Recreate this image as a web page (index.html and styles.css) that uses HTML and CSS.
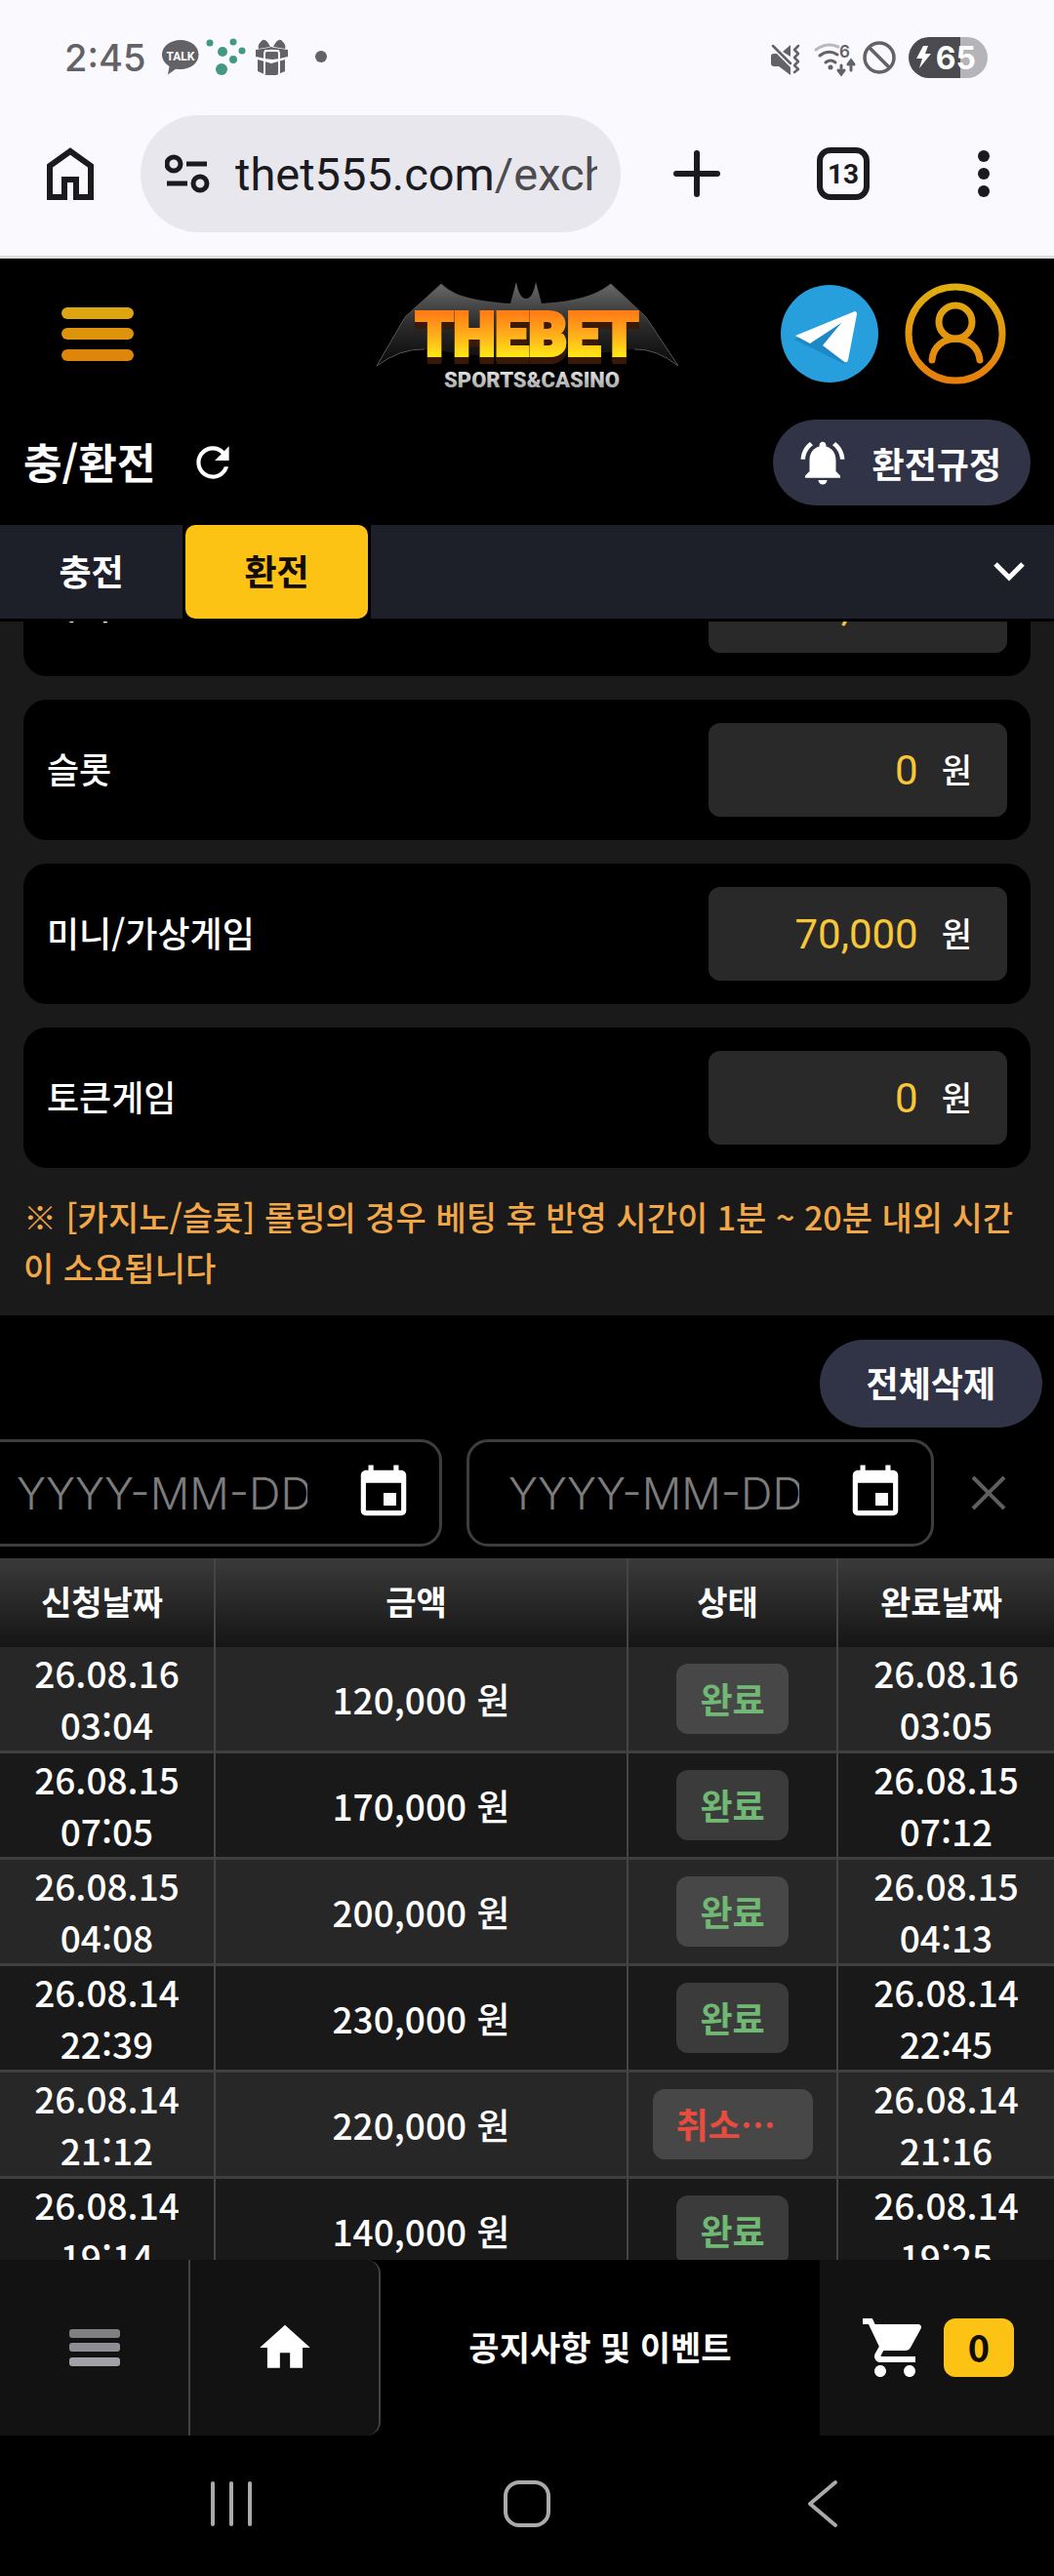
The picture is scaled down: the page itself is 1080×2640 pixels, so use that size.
FILE: index.html
```html
<!DOCTYPE html>
<html lang="ko">
<head>
  <meta charset="UTF-8">
  <meta name="viewport" content="width=device-width, initial-scale=1">
  <title>충/환전</title>
  <link rel="stylesheet" href="styles.css">
</head>
<body>
  <div class="status-bar">
    <div class="status-left">
      <span class="clock">2:45</span>
      <svg class="status-notices" width="172" height="40" viewBox="0 0 172 40">
        <path fill="#636267" d="M21 2C10.500 2 2 8.500 2 17c0 5 3 9 7.500 12L8 37.500l8-5.800c1.600.3 3.300.3 5 .3 10.500 0 18.500-6.500 18.500-15S31.500 2 21 2z"/>
        <text x="21" y="23" class="talk-text" text-anchor="middle">TALK</text>
        <g fill="#419983">
          <circle cx="51" cy="5" r="3.500"/>
          <circle cx="64" cy="14" r="5"/>
          <circle cx="75" cy="4" r="3.500"/>
          <circle cx="84" cy="13" r="3.500"/>
          <circle cx="75" cy="22" r="4"/>
          <circle cx="63" cy="32" r="6"/>
        </g>
        <g fill="#636267">
          <path d="M98 12l13-2 3-1 3 1 14 2v8l-8 2-9 1-8-1-8-2z"/>
          <path d="M100 22l14 4 14-4v12l-9 4h-10l-9-4z"/>
          <path d="M113 9c-3-7-7-9-9-6-3 3-4 5-3 8zM116 9c3-7 7-9 9-6 3 3 4 5 3 8z"/>
        </g>
        <path fill="none" stroke="#f9f9fe" stroke-width="2" d="M98 20l9 2 8 1 8-1 8-2M107 37V15c0-3 15-3 15 0v22M107 13h15"/>
        <circle cx="165" cy="19" r="6" fill="#636267"/>
      </svg>
    </div>
    <div class="status-right">
      <svg width="136" height="40" viewBox="0 0 136 40">
        <g fill="#636267">
          <path d="M1 18q0-2 3-2h3l14 14v8L9 29H4q-3 0-3-3zM13 14l8-7v12z"/>
        </g>
        <path fill="none" stroke="#636267" stroke-width="2.500" stroke-linecap="round" stroke-linejoin="round" d="M3 8l18 18M29 8l-4 4 4 4-4 4 4 4-4 4 4 4-4 3"/>
        <g fill="none" stroke="#636267" stroke-width="3" stroke-linecap="round">
          <path stroke="#b9b9be" d="M47 12q11-8 23-3"/>
          <path d="M51 18q9-7 18-1M57 25q5-4 10 0M73 28v8M70 33l3 4 3-4M83 33v-9M80 27l3-4 3 4"/>
        </g>
        <circle cx="62" cy="30" r="2.500" fill="#636267"/>
        <text x="71" y="20" class="wifi-gen">6</text>
        <circle cx="112" cy="20" r="15" fill="none" stroke="#636267" stroke-width="3.500"/>
        <path stroke="#636267" stroke-width="3.500" d="M101 9l22 22"/>
      </svg>
      <div class="battery">
        <svg width="16" height="24" viewBox="0 0 16 24"><path fill="#fff" d="M8 0h5l-3 8h6L4 23l3-10H1z"/></svg>
        <span>65</span>
      </div>
    </div>
  </div>

  <div class="toolbar">
    <button class="tool-btn tool-home" aria-label="Home">
      <svg width="48" height="54" viewBox="0 0 48 54"><path fill="none" stroke="#1b1a1f" stroke-width="6" d="M3 19L24 4l21 15v32H30V33H18v18H3z"/></svg>
    </button>
    <div class="address">
      <svg width="46" height="40" viewBox="0 0 46 40">
        <g fill="none" stroke="#1b1a1f" stroke-width="5">
          <circle cx="9" cy="10" r="7"/>
          <circle cx="36" cy="30" r="7"/>
          <path d="M22 10h21M2 30h21"/>
        </g>
      </svg>
      <div class="url">thet555.com<span>/exch</span></div>
    </div>
    <button class="tool-btn tool-new" aria-label="New tab">
      <svg width="48" height="48" viewBox="0 0 48 48"><path stroke="#1b1a1f" stroke-width="6" stroke-linecap="round" d="M24 3v42M3 24h42"/></svg>
    </button>
    <button class="tool-btn" aria-label="Tabs"><span class="tab-count">13</span></button>
    <button class="tool-btn" aria-label="Menu">
      <svg width="12" height="48" viewBox="0 0 12 48"><g fill="#1b1a1f"><circle cx="6" cy="6" r="6"/><circle cx="6" cy="24" r="6"/><circle cx="6" cy="42" r="6"/></g></svg>
    </button>
  </div>

  <header class="site-header">
    <button class="icon-btn header-menu" aria-label="메뉴">
      <svg width="76" height="56" viewBox="0 0 76 56">
        <rect x="1" y="1" width="74" height="12" rx="6" fill="#dda50f"/>
        <rect x="1" y="22" width="74" height="12" rx="6" fill="#dd940b"/>
        <rect x="1" y="44" width="74" height="12" rx="6" fill="#dd860b"/>
      </svg>
    </button>
    <a href="#" class="logo" aria-label="THEBET SPORTS&amp;CASINO">
      <svg width="310" height="120" viewBox="0 0 310 120">
        <defs>
          <linearGradient id="gold" x1="0" y1="0" x2="0" y2="1">
            <stop offset="0.2" stop-color="#ff7f16"/>
            <stop offset="0.5" stop-color="#ffae1b"/>
            <stop offset="0.8" stop-color="#ffe516"/>
          </linearGradient>
          <linearGradient id="wing" x1="0" y1="0" x2="0" y2="1">
            <stop offset="0" stop-color="#6b6b6b"/>
            <stop offset="0.5" stop-color="#2c2c2c"/>
            <stop offset="1" stop-color="#080808"/>
          </linearGradient>
          <linearGradient id="silver" x1="0" y1="0" x2="0" y2="1">
            <stop offset="0" stop-color="#eee"/>
            <stop offset="1" stop-color="#999"/>
          </linearGradient>
        </defs>
        <path fill="url(#wing)" d="M1 93L30 43 67 9q16 17 71 20l6-22q3 17 10 17t10-17l6 22q50-3 71-20l36 34 33 50q-23-18-45-17L154 88 50 76Q25 75 1 93z"/>
        <path fill="none" stroke="#555" d="M1 93L30 43 67 9q14 13 36 18M1 93q24-18 49-17M205 27q20-6 36-18l36 34 33 50q-23-18-45-17"/>
        <text x="155" y="82" text-anchor="middle" class="logo-name">THEBET</text>
        <text x="160" y="115" text-anchor="middle" class="logo-sub">SPORTS&amp;CASINO</text>
      </svg>
    </a>
    <div class="header-links">
      <a href="#" aria-label="텔레그램">
        <svg width="101" height="102" viewBox="0 0 101 102">
          <circle cx="50" cy="51" r="50" fill="#279fdc"/>
          <path fill="#1477b4" d="M14 57l61-27-10 52z" opacity=".55"/>
          <path fill="#fff" d="M15 53l61-25c1 0 2 1 2 3l-9 47q-1 4-5 1L43 63l19-23-32 21z"/>
        </svg>
      </a>
      <a href="#" aria-label="내 정보">
        <svg width="106" height="106" viewBox="0 0 106 106">
          <defs>
            <linearGradient id="ring" gradientUnits="userSpaceOnUse" x1="0" y1="0" x2="0" y2="106">
              <stop offset="0" stop-color="#e0b010"/>
              <stop offset="1" stop-color="#e57d0c"/>
            </linearGradient>
          </defs>
          <g fill="none" stroke="url(#ring)" stroke-width="7">
            <circle cx="53" cy="53" r="48"/>
            <circle cx="53" cy="41" r="17"/>
            <path stroke-linecap="round" d="M29 80c2-29 46-29 49 0"/>
          </g>
        </svg>
      </a>
    </div>
  </header>

  <div class="page-title">
    <h1>충/환전</h1>
    <button class="icon-btn" aria-label="새로고침">
      <svg width="50" height="50" viewBox="0 0 24 24"><path fill="#fff" d="M17.650 6.350C16.200 4.900 14.210 4 12 4c-4.420 0-7.990 3.580-7.990 8s3.570 8 7.990 8c3.730 0 6.840-2.550 7.730-6h-2.080c-.82 2.330-3.040 4-5.650 4-3.310 0-6-2.690-6-6s2.690-6 6-6c1.660 0 3.140.69 4.220 1.780L13 11h7V4l-2.350 2.350z"/></svg>
    </button>
    <button class="pill rules-btn">
      <svg width="54" height="54" viewBox="0 0 24 24">
        <path fill="#fff" d="M7.580 4.080L6.150 2.650C3.750 4.480 2.170 7.300 2.030 10.500h2c.15-2.650 1.510-4.970 3.550-6.420zM19.970 10.500h2c-.15-3.200-1.730-6.020-4.120-7.850l-1.420 1.430c2.020 1.450 3.390 3.770 3.540 6.420zM18 11c0-3.070-1.640-5.640-4.500-6.320V4c0-.83-.67-1.500-1.500-1.500s-1.500.67-1.500 1.500v.68C7.630 5.360 6 7.920 6 11v5l-2 2v1h16v-1l-2-2v-5zM12 22c1.100 0 2-.9 2-2h-4c0 1.100.9 2 2 2z"/>
      </svg>
      환전규정
    </button>
  </div>

  <nav class="tabs">
    <button class="tab">충전</button>
    <button class="tab active">환전</button>
    <button class="tabs-more" aria-label="펼치기">
      <svg width="32" height="20" viewBox="0 0 32 20"><path fill="none" stroke="#fff" stroke-width="5" d="M2 2l14 14L30 2"/></svg>
    </button>
  </nav>

  <main class="content">
    <section class="rolling">
      <div class="rolling-row">
        <label for="casino">카지노</label>
        <div class="amount"><input id="casino" type="text" value="1,000" readonly><span>원</span></div>
      </div>
      <div class="rolling-row">
        <label for="slot">슬롯</label>
        <div class="amount"><input id="slot" type="text" value="0" readonly><span>원</span></div>
      </div>
      <div class="rolling-row">
        <label for="mini">미니/가상게임</label>
        <div class="amount"><input id="mini" type="text" value="70,000" readonly><span>원</span></div>
      </div>
      <div class="rolling-row">
        <label for="token">토큰게임</label>
        <div class="amount"><input id="token" type="text" value="0" readonly><span>원</span></div>
      </div>
      <p class="notice">※ [카지노/슬롯] 롤링의 경우 베팅 후 반영 시간이 1분 ~ 20분 내외 시간이 소요됩니다</p>
    </section>

    <section class="history">
      <div class="history-actions">
        <button class="pill delete-btn">전체삭제</button>
      </div>
      <div class="date-filter">
        <div class="date-field">
          <input type="text" placeholder="YYYY-MM-DD" aria-label="시작일">
          <button class="icon-btn" aria-label="시작일 선택">
            <svg width="62" height="62" viewBox="0 0 24 24"><path fill="#fff" d="M17 12h-5v5h5v-5zM16 1v2H8V1H6v2H5c-1.110 0-1.990.9-1.990 2L3 19c0 1.100.89 2 2 2h14c1.100 0 2-.9 2-2V5c0-1.100-.9-2-2-2h-1V1h-2zm3 18H5V8h14v11z"/></svg>
          </button>
        </div>
        <div class="date-field">
          <input type="text" placeholder="YYYY-MM-DD" aria-label="종료일">
          <button class="icon-btn" aria-label="종료일 선택">
            <svg width="62" height="62" viewBox="0 0 24 24"><path fill="#fff" d="M17 12h-5v5h5v-5zM16 1v2H8V1H6v2H5c-1.110 0-1.990.9-1.990 2L3 19c0 1.100.89 2 2 2h14c1.100 0 2-.9 2-2V5c0-1.100-.9-2-2-2h-1V1h-2zm3 18H5V8h14v11z"/></svg>
          </button>
        </div>
        <button class="icon-btn date-clear" aria-label="날짜 지우기">
          <svg width="36" height="36" viewBox="0 0 36 36"><path stroke="#5f5f5f" stroke-width="4" d="M2 2l32 32M34 2L2 34"/></svg>
        </button>
      </div>

      <table>
        <colgroup>
          <col class="col-date">
          <col>
          <col class="col-status">
          <col class="col-date">
        </colgroup>
        <thead>
          <tr><th>신청날짜</th><th>금액</th><th>상태</th><th>완료날짜</th></tr>
        </thead>
        <tbody>
          <tr>
            <td>26.08.16<br>03:04</td>
            <td>120,000 원</td>
            <td><span class="badge done">완료</span></td>
            <td>26.08.16<br>03:05</td>
          </tr>
          <tr>
            <td>26.08.15<br>07:05</td>
            <td>170,000 원</td>
            <td><span class="badge done">완료</span></td>
            <td>26.08.15<br>07:12</td>
          </tr>
          <tr>
            <td>26.08.15<br>04:08</td>
            <td>200,000 원</td>
            <td><span class="badge done">완료</span></td>
            <td>26.08.15<br>04:13</td>
          </tr>
          <tr>
            <td>26.08.14<br>22:39</td>
            <td>230,000 원</td>
            <td><span class="badge done">완료</span></td>
            <td>26.08.14<br>22:45</td>
          </tr>
          <tr>
            <td>26.08.14<br>21:12</td>
            <td>220,000 원</td>
            <td><span class="badge cancel">취소⋯</span></td>
            <td>26.08.14<br>21:16</td>
          </tr>
          <tr>
            <td>26.08.14<br>19:14</td>
            <td>140,000 원</td>
            <td><span class="badge done">완료</span></td>
            <td>26.08.14<br>19:25</td>
          </tr>
        </tbody>
      </table>
    </section>
  </main>

  <nav class="bottom-nav">
    <button class="nav-menu" aria-label="전체 메뉴">
      <svg width="52" height="40" viewBox="0 0 52 40">
        <rect y="1" width="52" height="9" rx="3" fill="#808083"/>
        <rect y="15" width="52" height="9" rx="3" fill="#8e8d93"/>
        <rect y="30" width="52" height="9" rx="3" fill="#a3a1a8"/>
      </svg>
    </button>
    <a href="#" class="nav-home" aria-label="홈">
      <svg width="62" height="62" viewBox="0 0 24 24"><path fill="#fff" d="M10 20v-6h4v6h5v-8h3L12 3 2 12h3v8z"/></svg>
    </a>
    <a href="#" class="nav-notice">공지사항 및 이벤트</a>
    <button class="nav-cart" aria-label="카트">
      <svg width="72" height="72" viewBox="0 0 24 24"><path fill="#fff" d="M7 18c-1.100 0-1.990.9-1.990 2S5.900 22 7 22s2-.9 2-2-.9-2-2-2zM1 2v2h2l3.600 7.590-1.350 2.450c-.16.280-.25.610-.25.960 0 1.100.9 2 2 2h12v-2H7.420c-.14 0-.25-.11-.25-.25l.03-.12.900-1.630h7.450c.75 0 1.410-.41 1.750-1.030l3.580-6.490c.08-.14.120-.31.120-.48 0-.55-.45-1-1-1H5.210l-.94-2H1zm16 16c-1.100 0-1.990.9-1.990 2s.89 2 1.990 2 2-.9 2-2-.9-2-2-2z"/></svg>
      <span class="cart-count">0</span>
    </button>
  </nav>

  <div class="system-nav">
    <button aria-label="Recents">
      <svg width="44" height="50" viewBox="0 0 44 50"><path stroke="#aaa" stroke-width="4" stroke-linecap="round" d="M3 4v42M22 4v42M41 4v42"/></svg>
    </button>
    <button aria-label="Home">
      <svg width="50" height="50" viewBox="0 0 50 50"><rect x="3" y="3" width="44" height="44" rx="14" fill="none" stroke="#aaa" stroke-width="4"/></svg>
    </button>
    <button aria-label="Back">
      <svg width="32" height="50" viewBox="0 0 32 50"><path fill="none" stroke="#aaa" stroke-width="4" stroke-linecap="round" stroke-linejoin="round" d="M29 3L3 25l26 22"/></svg>
    </button>
  </div>
</body>
</html>
```

FILE: styles.css
```css
* {
  box-sizing: border-box;
}

body {
  font-family: "Noto Sans CJK KR", sans-serif;
  font-size: 36px;
  font-weight: 500;
  height: 100vh;
  margin: 0;
  display: flex;
  flex-direction: column;
  overflow: hidden;
  background-color: #000;
  color: #fff;
}

button,
input {
  font: inherit;
  color: inherit;
  background: none;
  border: none;
  margin: 0;
  padding: 0;
}

button {
  cursor: pointer;
}

a {
  color: inherit;
  text-decoration: none;
}

svg {
  display: block;
  flex-shrink: 0;
}

.icon-btn {
  display: flex;
  align-items: center;
  justify-content: center;
}

/* phone status bar */
.status-bar {
  display: flex;
  align-items: center;
  justify-content: space-between;
  height: 118px;
  flex-shrink: 0;
  padding: 0 68px 0 66px;
  background-color: #f9f9fe;
  color: #636267;
  font-family: Inter, sans-serif;
}

.status-left {
  display: flex;
  align-items: center;
  gap: 12px;
}

.status-right {
  display: flex;
  align-items: center;
  gap: 6px;
}

.clock {
  font-size: 38px;
  width: 86px;
}

.talk-text {
  font: 700 12px Roboto, sans-serif;
  fill: #fff;
}

.wifi-gen {
  font: 600 17px Inter, sans-serif;
  fill: #636267;
}

.battery {
  display: flex;
  align-items: center;
  gap: 5px;
  height: 42px;
  padding: 0 12px 0 7px;
  border-radius: 21px;
  background: linear-gradient(90deg, #4b4a4f 65%, #b5b4b9 65%);
  color: #fff;
  font-size: 32px;
  font-weight: 700;
}

/* browser toolbar */
.toolbar {
  display: flex;
  flex-shrink: 0;
  padding-bottom: 24px;
  background-color: #f9f9fe;
  border-bottom: 3px solid #dddde1;
  color: #1b1a1f;
}

.tool-btn {
  width: 144px;
  flex-shrink: 0;
  display: flex;
  align-items: center;
  justify-content: center;
}

.tool-new {
  width: 156px;
}

.address {
  flex: 1;
  min-width: 0;
  height: 120px;
  display: flex;
  align-items: center;
  gap: 26px;
  padding: 0 24px 0 25px;
  border-radius: 60px;
  background-color: #e8e7ee;
}

.url {
  flex: 1;
  font-family: Roboto, sans-serif;
  font-size: 47px;
  font-weight: 400;
  white-space: nowrap;
  overflow: hidden;
}

.url span {
  color: #4c4b50;
}

.tab-count {
  display: flex;
  align-items: center;
  justify-content: center;
  width: 54px;
  height: 54px;
  border: 6px solid #1b1a1f;
  border-radius: 14px;
  font-family: Roboto, sans-serif;
  font-size: 28px;
  font-weight: 700;
}

/* site header */
.site-header {
  display: grid;
  grid-template-columns: 1fr auto 1fr;
  align-items: center;
  height: 154px;
  flex-shrink: 0;
  padding: 0 48px;
}

.header-menu {
  justify-self: start;
  padding-left: 14px;
}

.logo-name {
  font: 900 61px Roboto, sans-serif;
  fill: url(#gold);
  stroke: url(#gold);
  stroke-width: 4px;
  filter: drop-shadow(0 4px 0 #3a1a06) drop-shadow(0 3px 0 #3a1a06);
}

.logo-sub {
  font: 900 22px Roboto, sans-serif;
  fill: url(#silver);
}

.header-links {
  display: flex;
  align-items: center;
  justify-content: flex-end;
  gap: 25px;
}

.page-title {
  display: flex;
  align-items: center;
  height: 119px;
  flex-shrink: 0;
  padding: 0 24px 10px;
}

.page-title h1 {
  margin: 0 34px 0 0;
  padding-bottom: 4px;
  font-size: 43px;
  font-weight: 700;
}

.pill {
  display: flex;
  align-items: center;
  justify-content: center;
  height: 88px;
  border-radius: 44px;
  background-color: #313447;
  font-weight: 700;
}

.rules-btn {
  gap: 24px;
  margin-left: auto;
  padding: 0 30px 0 24px;
}

/* tabs */
.tabs {
  display: flex;
  gap: 3px;
  height: 99px;
  flex-shrink: 0;
  border-bottom: 3px solid #000;
}

.tab {
  width: 187px;
  padding-bottom: 4px;
  background-color: #1d1f29;
  font-weight: 700;
}

.tab.active {
  border-radius: 10px;
  background-color: #fcc314;
  color: #120c04;
}

.tabs-more {
  flex: 1;
  display: flex;
  align-items: center;
  justify-content: flex-end;
  padding-right: 30px;
  background-color: #1d1f29;
}

/* scrolled content */
.content {
  flex: 1;
  min-height: 0;
  overflow: hidden;
}

.rolling {
  display: flex;
  flex-direction: column;
  gap: 24px;
  margin-top: -88px;
  padding: 0 24px 23px;
  background-color: #1a1a1a;
}

.rolling-row {
  display: flex;
  align-items: center;
  justify-content: space-between;
  padding: 24px;
  border-radius: 24px;
  background-color: #000;
}

.rolling-row label {
  padding-bottom: 4px;
}

.amount {
  display: flex;
  align-items: center;
  gap: 24px;
  width: 306px;
  height: 96px;
  padding: 0 36px 0 24px;
  border-radius: 12px;
  background-color: #292929;
}

.amount input {
  flex: 1;
  min-width: 0;
  font-family: Roboto, sans-serif;
  font-size: 42px;
  font-weight: 400;
  color: #f8c639;
  text-align: right;
}

.amount span {
  padding-bottom: 4px;
  font-size: 34px;
}

.notice {
  margin: 0;
  font-size: 34px;
  line-height: 52px;
  color: #f3a848;
  word-break: break-all;
}

/* history */
.history-actions {
  display: flex;
  justify-content: flex-end;
  padding: 25px 12px 12px;
}

.delete-btn {
  height: 90px;
  border-radius: 45px;
  padding: 0 48px 4px;
}

.date-filter {
  display: flex;
  justify-content: flex-end;
  gap: 25px;
  overflow: hidden;
  padding-bottom: 12px;
}

.date-field {
  display: flex;
  align-items: center;
  justify-content: space-between;
  flex-shrink: 0;
  width: 479px;
  height: 110px;
  padding: 0 26px 0 40px;
  border: 3px solid #3d3d3d;
  border-radius: 22px;
}

.date-field input {
  width: 298px;
  font-family: Inter, sans-serif;
  font-size: 45px;
  font-weight: 300;
}

.date-field input::placeholder {
  color: #7c7c7c;
}

.date-clear {
  width: 98px;
  flex-shrink: 0;
  padding-right: 36px;
}

table {
  width: 100%;
  table-layout: fixed;
  border-collapse: separate;
  border-spacing: 0;
}

.col-date {
  width: 221px;
}

.col-status {
  width: 215px;
}

thead {
  background: linear-gradient(#3a3a3a, #151515);
}

th,
td {
  padding: 0;
  border-right: 2px solid #454545;
  text-align: center;
}

th:last-child,
td:last-child {
  border-right: none;
}

th {
  height: 91px;
  padding: 0 10px 4px 0;
  font-size: 34px;
  font-weight: 700;
}

td {
  border-bottom: 3px solid #3f3f3f;
  font-size: 37px;
  line-height: 53px;
}

tbody tr {
  background-color: #191919;
}

tbody tr:nth-child(odd) {
  background-color: #272727;
}

.badge {
  display: inline-block;
  height: 72px;
  padding: 0 24px;
  border-radius: 12px;
  background-color: rgba(255, 255, 255, 0.15);
  font-size: 36px;
  font-weight: 700;
  line-height: 70px;
  vertical-align: middle;
}

.done {
  color: #70b874;
}

.cancel {
  width: 164px;
  color: #e84c3f;
  text-align: left;
}

/* bottom navigation */
.bottom-nav {
  display: flex;
  height: 180px;
  flex-shrink: 0;
}

.bottom-nav > * {
  display: flex;
  align-items: center;
  justify-content: center;
  background-color: #121212;
}

.nav-menu {
  width: 195px;
  border-right: 2px solid #424242;
}

.nav-home {
  width: 195px;
  border-right: 2px solid #424242;
  border-radius: 0 14px 14px 0;
}

.bottom-nav .nav-notice {
  flex: 1;
  padding-bottom: 4px;
  background-color: #000;
  font-size: 34px;
  font-weight: 700;
}

.nav-cart {
  width: 240px;
  gap: 14px;
}

.cart-count {
  width: 72px;
  height: 60px;
  border-radius: 12px;
  background-color: #fcc314;
  color: #120c04;
  font-size: 38px;
  font-weight: 700;
  line-height: 58px;
}

.system-nav {
  display: flex;
  height: 144px;
  flex-shrink: 0;
  padding: 0 86px;
}

.system-nav button {
  flex: 1;
  display: flex;
  align-items: center;
  justify-content: center;
  padding-bottom: 4px;
}
```
